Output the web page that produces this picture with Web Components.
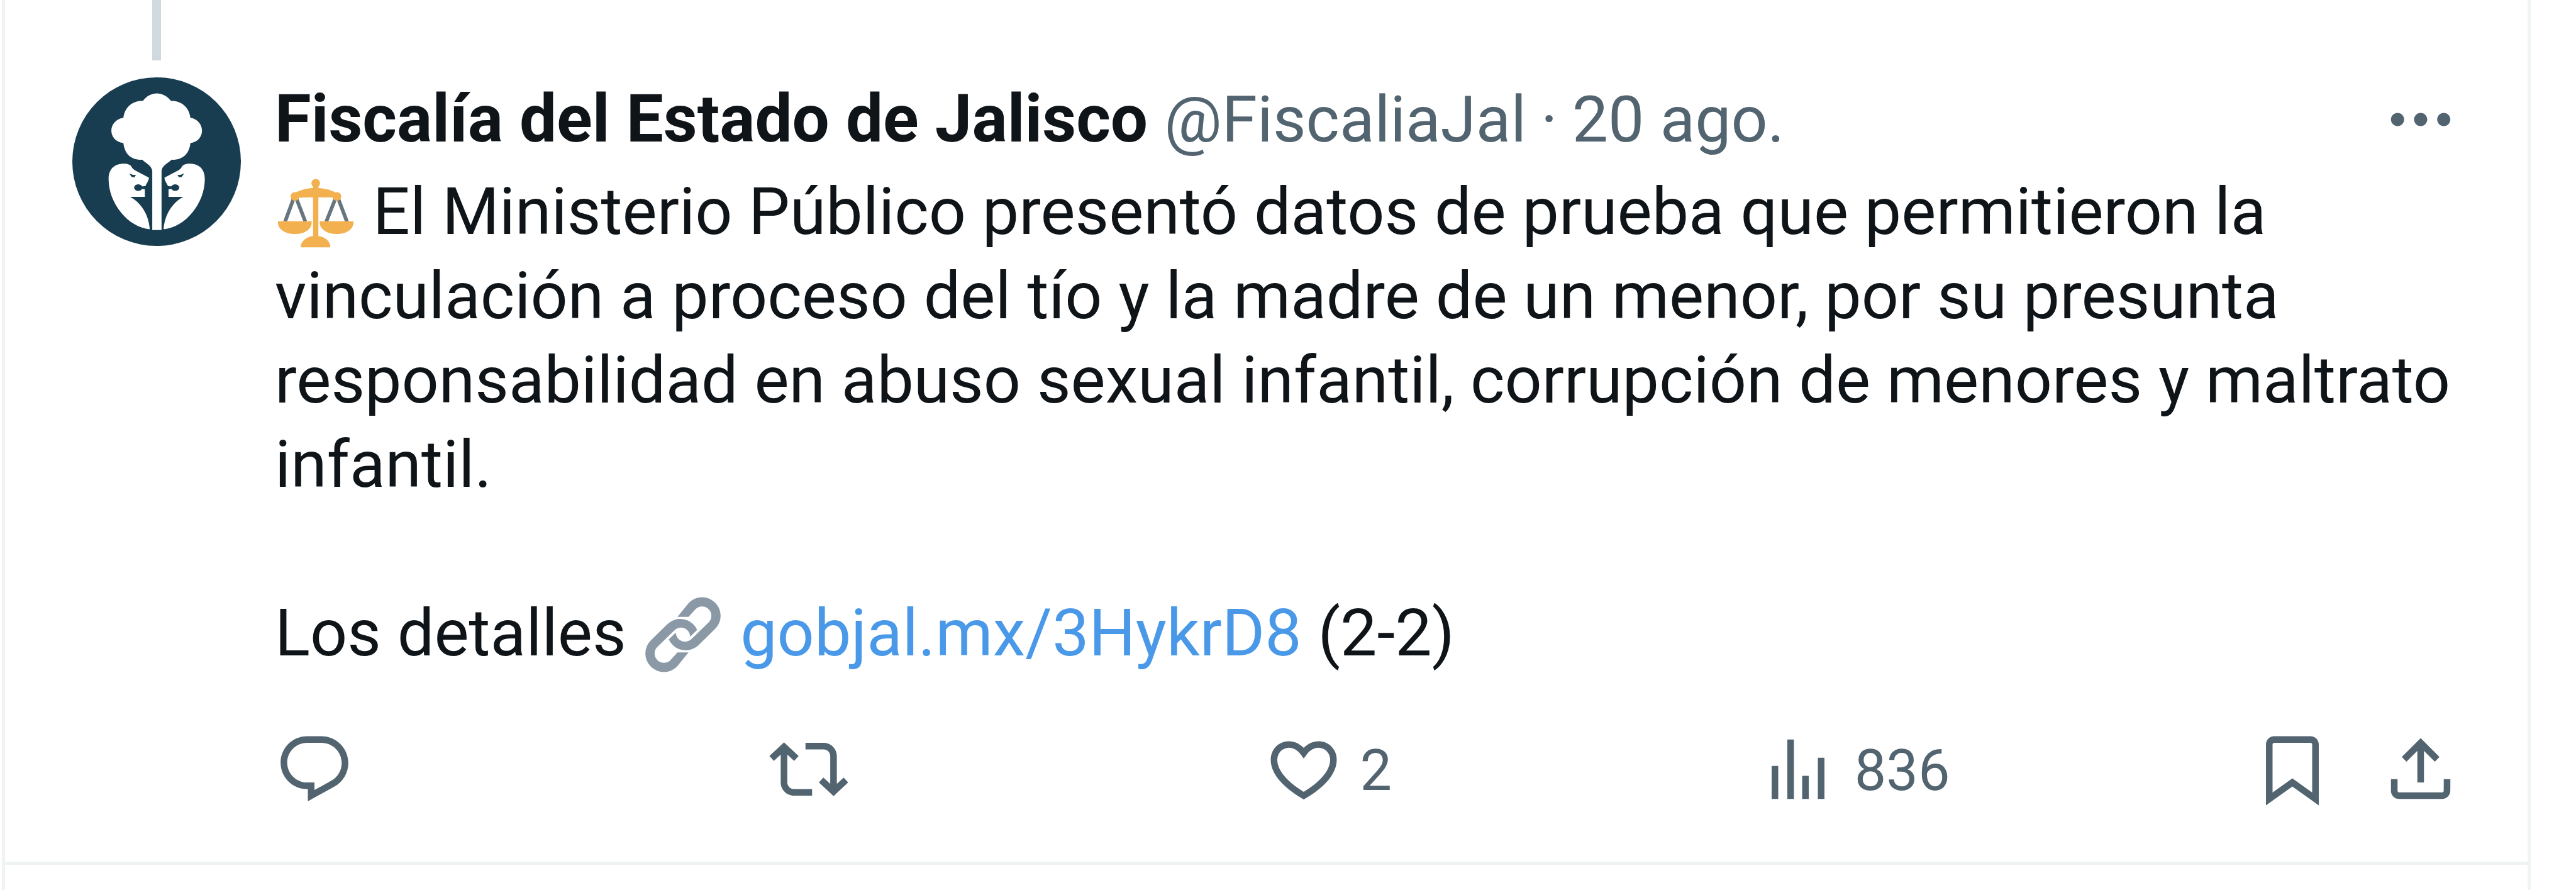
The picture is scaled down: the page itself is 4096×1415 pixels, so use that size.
<!DOCTYPE html>
<html lang="es">
<head>
  <meta charset="UTF-8">
  <meta name="viewport" content="width=device-width, initial-scale=1.0">
  <title>Fiscalía del Estado de Jalisco</title>
  <style>
    body {
      margin: 0;
      background: #fff;
      color: #0f1419;
      font-family: Roboto, "Liberation Sans", sans-serif;
      font-size: 104px;
      line-height: 134px;
      --muted: #536471;
      --link: #4a99e9;
      --line: #eff3f4;
    }
  </style>
</head>
<body>
  <post-timeline>
    <post-card>
      <post-avatar slot="avatar"></post-avatar>
      <post-author slot="author" name="Fiscalía del Estado de Jalisco" handle="@FiscaliaJal" date="20 ago."></post-author>
      <p slot="text"><post-emoji name="scales"></post-emoji> El Ministerio Público presentó datos de prueba que permitieron la vinculación a proceso del tío y la madre de un menor, por su presunta responsabilidad en abuso sexual infantil, corrupción de menores y maltrato infantil.<br><br>Los detalles <post-emoji name="link"></post-emoji> <a href="#enlace">gobjal.mx/3HykrD8</a> (2-2)</p>
      <post-action slot="counts" icon="reply" label="Responder"></post-action>
      <post-action slot="counts" icon="repost" label="Repostear"></post-action>
      <post-action slot="counts" icon="like" label="Me gusta">2</post-action>
      <post-action slot="counts" icon="views" label="Ver estadísticas">836</post-action>
      <post-action slot="tools" icon="bookmark" label="Guardar"></post-action>
      <post-action slot="tools" icon="share" label="Compartir"></post-action>
    </post-card>
  </post-timeline>

  <script>
    const ICONS = {
      reply: 'M1.751 10c0-4.42 3.584-8 8.005-8h4.366c4.49 0 8.129 3.64 8.129 8.13 0 2.96-1.607 5.68-4.196 7.11l-8.054 4.46v-3.69h-.067c-4.49.1-8.183-3.51-8.183-8.01zm8.005-6c-3.317 0-6.005 2.69-6.005 6 0 3.37 2.77 6.08 6.138 6.01l.351-.01h1.761v2.3l5.087-2.81c1.951-1.08 3.163-3.13 3.163-5.36 0-3.39-2.744-6.13-6.129-6.13H9.756z',
      repost: 'M4.5 3.88l4.432 4.14-1.364 1.46L5.5 7.55V16c0 1.1.896 2 2 2H13v2H7.5c-2.209 0-4-1.79-4-4V7.55L1.432 9.48.068 8.02 4.5 3.88zM16.5 6H11V4h5.5c2.209 0 4 1.79 4 4v8.45l2.068-1.93 1.364 1.46-4.432 4.14-4.432-4.14 1.364-1.46 2.068 1.93V8c0-1.1-.896-2-2-2z',
      like: 'M16.697 5.5c-1.222-.06-2.679.51-3.89 2.16l-.805 1.09-.806-1.09C9.984 6.01 8.526 5.44 7.304 5.5c-1.243.07-2.349.78-2.91 1.91-.552 1.12-.633 2.78.479 4.82 1.074 1.97 3.257 4.27 7.129 6.61 3.87-2.34 6.052-4.64 7.126-6.61 1.111-2.04 1.03-3.7.477-4.82-.561-1.13-1.666-1.84-2.908-1.91zm4.187 7.69c-1.351 2.48-4.001 5.12-8.379 7.67l-.503.3-.504-.3c-4.379-2.55-7.029-5.19-8.382-7.67-1.36-2.5-1.41-4.86-.514-6.67.887-1.79 2.647-2.91 4.601-3.01 1.651-.09 3.368.56 4.798 2.01 1.429-1.45 3.146-2.1 4.796-2.01 1.954.1 3.714 1.22 4.601 3.01.896 1.81.846 4.17-.514 6.67z',
      views: 'M8.75 21V3h2v18h-2zM18 21V8.5h2V21h-2zM4 21l.004-10h2L6 21H4zm9.248 0v-7h2v7h-2z',
      bookmark: 'M4 4.5C4 3.12 5.119 2 6.5 2h11C18.881 2 20 3.12 20 4.5v18.44l-8-5.71-8 5.71V4.5zM6.5 4c-.276 0-.5.22-.5.5v14.56l6-4.29 6 4.29V4.5c0-.28-.224-.5-.5-.5h-11z',
      share: 'M12 2.59l5.7 5.7-1.41 1.42L13 6.41V16h-2V6.41l-3.3 3.3-1.41-1.42L12 2.59zM21 15l-.02 3.51c0 1.38-1.12 2.49-2.5 2.49H5.5C4.11 21 3 19.88 3 18.5V15h2v3.5c0 .28.22.5.5.5h12.98c.28 0 .5-.22.5-.5L19 15h2z',
      more: 'M3 12c0-1.1.9-2 2-2s2 .9 2 2-.9 2-2 2-2-.9-2-2zm9 2c1.1 0 2-.9 2-2s-.9-2-2-2-2 .9-2 2 .9 2 2 2zm7 0c1.1 0 2-.9 2-2s-.9-2-2-2-2 .9-2 2 .9 2 2 2z'
    };

    const EMOJI = {
      scales: {
        label: 'Balanza',
        svg: `<svg viewBox="67 70 370 370" aria-hidden="true">
          <path d="M143 185L102 296M158 185L201 296M348 185L304 296M363 185L405 296" stroke="#67757f" stroke-width="18"/>
          <g fill="#f3b04e">
            <circle cx="252" cy="108" r="21"/>
            <path d="M148 156C178 140 215 131 252 131S326 140 356 156V180C320 176 184 176 148 180z"/>
            <circle cx="150" cy="173" r="21"/>
            <circle cx="356" cy="173" r="21"/>
            <path d="M239 120h26v250h-26z"/>
            <path d="M179 422v-10c7-27 36-46 73-46s64 19 71 46v10z"/>
            <path d="M67 294h165v10c-2 31-38 53-82 53s-81-22-83-53z"/>
            <path d="M272 294h165v10c-2 31-38 53-82 53s-81-22-83-53z"/>
          </g>
        </svg>`
      },
      link: {
        label: 'Enlace',
        svg: `<svg viewBox="48 76 368 368" aria-hidden="true">
          <g fill="#8b99a6">
            <path d="M205 173L261 104A90 90 0 0 1 389 232L307 312A90 90 0 0 1 163 283L197 250A45 45 0 0 0 275 280L357 200A45 45 0 0 0 293 136L259 173Z"/>
            <path transform="rotate(180 232 260)" d="M205 173L261 104A90 90 0 0 1 389 232L307 312A90 90 0 0 1 163 283L197 250A45 45 0 0 0 275 280L357 200A45 45 0 0 0 293 136L259 173Z"/>
          </g>
        </svg>`
      }
    };

    const icon = (name) => `<svg viewBox="0 0 24 24" aria-hidden="true"><path d="${ICONS[name]}"/></svg>`;

    class PostTimeline extends HTMLElement {
      constructor() {
        super();
        this.attachShadow({ mode: 'open' });
        this.shadowRoot.innerHTML = `
          <style>
            :host {
              display: block;
              box-sizing: border-box;
              min-height: 100vh;
              margin: 0 72px 0 3px;
              border: solid var(--line);
              border-width: 0 5px;
            }
          </style>
          <slot></slot>
        `;
      }
    }

    class PostCard extends HTMLElement {
      constructor() {
        super();
        this.attachShadow({ mode: 'open' });
        this.shadowRoot.innerHTML = `
          <style>
            :host {
              display: block;
              border-bottom: 5px solid var(--line);
            }
            article {
              display: flex;
              gap: 54px;
              padding: 0 107px 80px;
            }
            .side {
              display: flex;
              flex-direction: column;
              align-items: center;
              gap: 27px;
            }
            /* connects to the previous post of the thread */
            .thread {
              width: 14px;
              height: 96px;
              background: #cfd9de;
            }
            .main {
              flex: 1;
              min-width: 0;
              padding-top: 123px;
            }
            ::slotted(p) {
              margin: 13px 0 82px;
            }
            .actions, .counts, .tools {
              display: flex;
            }
            .counts {
              flex: 1;
            }
            .counts ::slotted(*) {
              flex: 1;
            }
            .tools {
              gap: 78px;
            }
          </style>
          <article>
            <div class="side">
              <div class="thread"></div>
              <slot name="avatar"></slot>
            </div>
            <div class="main">
              <slot name="author"></slot>
              <slot name="text"></slot>
              <div class="actions">
                <div class="counts"><slot name="counts"></slot></div>
                <div class="tools"><slot name="tools"></slot></div>
              </div>
            </div>
          </article>
        `;
      }
    }

    class PostAvatar extends HTMLElement {
      constructor() {
        super();
        this.attachShadow({ mode: 'open' });
        this.shadowRoot.innerHTML = `
          <style>
            :host {
              display: block;
              width: 268px;
              height: 268px;
            }
            svg {
              display: block;
              width: 100%;
              height: 100%;
            }
          </style>
          <svg viewBox="52 376 818 818" aria-hidden="true">
            <defs>
              <g id="face">
                <path fill="#fff" d="M228 870C228 815 262 795 303 795C325 795 337 802 342 815C352 828 370 834 385 842L424 863C422 880 414 888 407 903L388 906V917L404 919V956H332C385 982 424 1045 428 1113C325 1105 228 990 228 870z"/>
                <ellipse cx="372" cy="911" rx="20" ry="16"/>
                <path d="M385 906h30v9h-30z"/>
                <path d="M328 842l18 7 15 1-8 11-13-2z"/>
              </g>
            </defs>
            <circle cx="461" cy="785" r="409" fill="#193d50"/>
            <path fill="#fff" d="M395 490C430 442 495 442 530 490C590 490 620 530 625 572C700 585 700 685 625 695C620 745 590 778 533 776C518 793 488 802 485 830V1117H440V830C436 802 407 793 392 776C335 778 305 745 300 695C222 685 222 585 300 572C305 530 335 490 395 490z"/>
            <use href="#face" fill="#193d50"/>
            <use href="#face" fill="#193d50" transform="matrix(-1 0 0 1 923 0)"/>
          </svg>
        `;
      }
    }

    class PostAuthor extends HTMLElement {
      constructor() {
        super();
        this.attachShadow({ mode: 'open' });
      }

      connectedCallback() {
        this.shadowRoot.innerHTML = `
          <style>
            :host {
              display: flex;
              align-items: center;
              color: var(--muted);
              font-size: 102px;
            }
            a {
              color: inherit;
              text-decoration: none;
            }
            .name {
              margin-right: 26px;
              color: #0f1419;
              font-size: 105px;
              font-weight: 700;
            }
            .dot {
              margin: 0 23px;
            }
            button {
              margin-left: auto;
              padding: 0;
              border: 0;
              background: none;
              color: inherit;
            }
            svg {
              display: block;
              width: 126px;
              height: 126px;
              fill: currentColor;
            }
          </style>
          <a class="name" href="#perfil">${this.getAttribute('name')}</a>
          <a href="#perfil">${this.getAttribute('handle')}</a>
          <span class="dot">·</span>
          <a href="#post"><time>${this.getAttribute('date')}</time></a>
          <button type="button" aria-label="Más opciones">${icon('more')}</button>
        `;
      }
    }

    class PostEmoji extends HTMLElement {
      constructor() {
        super();
        this.attachShadow({ mode: 'open' });
      }

      connectedCallback() {
        const emoji = EMOJI[this.getAttribute('name')];
        this.setAttribute('role', 'img');
        this.setAttribute('aria-label', emoji.label);
        this.shadowRoot.innerHTML = `
          <style>
            :host {
              display: inline-block;
              width: 120px;
              height: 120px;
              margin: 0 5px;
              vertical-align: -27px;
            }
            svg {
              display: block;
            }
          </style>
          ${emoji.svg}
        `;
      }
    }

    class PostAction extends HTMLElement {
      constructor() {
        super();
        this.attachShadow({ mode: 'open' });
      }

      connectedCallback() {
        const count = this.textContent ? '<span><slot></slot></span>' : '';
        this.shadowRoot.innerHTML = `
          <style>
            :host {
              display: block;
            }
            button {
              display: flex;
              align-items: center;
              gap: 27px;
              height: 134px;
              padding: 0;
              border: 0;
              background: none;
              color: var(--muted);
              font: inherit;
              font-size: 90px;
              line-height: 128px;
            }
            svg {
              width: 126px;
              height: 126px;
              fill: currentColor;
            }
            span {
              padding-top: 6px;
            }
          </style>
          <button type="button" aria-label="${this.getAttribute('label')}">${icon(this.getAttribute('icon'))}${count}</button>
        `;
      }
    }

    customElements.define('post-timeline', PostTimeline);
    customElements.define('post-card', PostCard);
    customElements.define('post-avatar', PostAvatar);
    customElements.define('post-author', PostAuthor);
    customElements.define('post-emoji', PostEmoji);
    customElements.define('post-action', PostAction);

    // links typed inside a post's text
    document.querySelectorAll('p a').forEach((a) => {
      a.style.color = 'var(--link)';
      a.style.textDecoration = 'none';
    });
  </script>
</body>
</html>
